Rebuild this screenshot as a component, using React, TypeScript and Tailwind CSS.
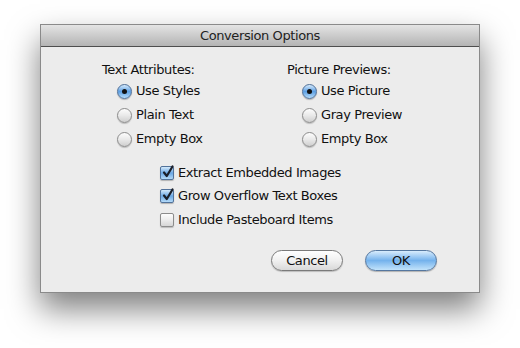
const font = { fontFamily: '"DejaVu Sans", "Lucida Grande", Verdana, sans-serif' };

type Opt = { label: string; on?: boolean };

const Radio = ({ on }: { on?: boolean }) => (
    <span
        className={
            on
                ? "relative flex h-[15px] w-[15px] shrink-0 items-center justify-center rounded-full border border-[#4f6f98] bg-linear-to-b from-[#d6ebfc] via-[#5d9fe2] to-[#b5dcfa] shadow-[0_1px_1px_rgba(0,0,0,0.25)]"
                : "relative flex h-[15px] w-[15px] shrink-0 items-center justify-center rounded-full border border-[#8c8c8c] bg-linear-to-b from-[#fdfdfd] via-[#e9e9e9] to-[#cfcfcf] shadow-[0_1px_1px_rgba(0,0,0,0.2)]"
        }
    >
        {on && <span className="h-[5px] w-[5px] rounded-full bg-[#111]" />}
    </span>
);

const Check = ({ on }: { on?: boolean }) => (
    <span
        className={
            on
                ? "relative h-[14px] w-[14px] shrink-0 rounded-[2px] border border-[#52729a] bg-linear-to-b from-[#d4eafb] via-[#6aa7e4] to-[#b4daf8] shadow-[0_1px_1px_rgba(0,0,0,0.25)]"
                : "relative h-[14px] w-[14px] shrink-0 rounded-[2px] border border-[#8c8c8c] bg-linear-to-b from-[#fdfdfd] via-[#ececec] to-[#d6d6d6] shadow-[0_1px_1px_rgba(0,0,0,0.2)]"
        }
    >
        {on && (
            <svg className="absolute -top-[2px] left-[1px]" width="13" height="14" viewBox="0 0 13 14">
                <path d="M2 7.5 L4.8 11 L10.5 1.5" fill="none" stroke="#1a1f2a" strokeWidth="2.2" strokeLinecap="round" strokeLinejoin="round" />
            </svg>
        )}
    </span>
);

const RadioGroup = ({ title, items }: { title: string; items: Opt[] }) => (
    <div className="flex flex-col">
        <div className="h-[16px] leading-[16px]">{title}</div>
        <div className="mt-[1px] flex flex-col pl-[15px]">
            {items.map((it) => (
                <div key={it.label} className="flex h-[24px] items-center gap-[4px]">
                    <Radio on={it.on} />
                    <span className="leading-[16px]">{it.label}</span>
                </div>
            ))}
        </div>
    </div>
);

const App = () => {
    return (
        <div className="h-[348px] w-[520px] bg-white pl-[40px] pt-[24px] text-[13px] tracking-[-0.4px] text-[#111]" style={font}>
            <div className="flex h-[269px] w-[440px] flex-col border border-[#8a8a8a] bg-[#ececec] shadow-[0_16px_30px_rgba(0,0,0,0.5)]">
                <div className="flex h-[22px] items-center justify-center border-b border-[#4e4e4e] bg-linear-to-b from-[#e4e4e4] to-[#b4b4b4] text-[#222]">
                    Conversion Options
                </div>
                <div className="flex flex-1 flex-col pt-[15px]">
                    <div className="flex pl-[61px]">
                        <div className="w-[185px]">
                            <RadioGroup title="Text Attributes:" items={[{ label: "Use Styles", on: true }, { label: "Plain Text" }, { label: "Empty Box" }]} />
                        </div>
                        <RadioGroup title="Picture Previews:" items={[{ label: "Use Picture", on: true }, { label: "Gray Preview" }, { label: "Empty Box" }]} />
                    </div>
                    <div className="mt-[10px] flex flex-col pl-[119px]">
                        {[
                            { label: "Extract Embedded Images", on: true },
                            { label: "Grow Overflow Text Boxes", on: true },
                            { label: "Include Pasteboard Items" },
                        ].map((it) => (
                            <div key={it.label} className="flex h-[23.5px] items-center gap-[4px]">
                                <Check on={it.on} />
                                <span className="leading-[16px]">{it.label}</span>
                            </div>
                        ))}
                    </div>
                    <div className="mt-auto flex justify-end gap-[22px] pb-[21px] pr-[42px]">
                        <button className="h-[21px] w-[72px] rounded-full border border-[#7a7a7a] bg-linear-to-b from-white via-[#f0f0f0] to-[#d9d9d9] leading-[19px] shadow-[0_1px_1px_rgba(0,0,0,0.2)]">
                            Cancel
                        </button>
                        <button className="h-[21px] w-[72px] rounded-full border border-[#55779f] bg-linear-to-b from-[#d8ecfc] via-[#74b2ec] to-[#c2e3fb] leading-[19px] shadow-[0_1px_1px_rgba(0,0,0,0.25)]">
                            OK
                        </button>
                    </div>
                </div>
            </div>
        </div>
    );
};

export default App;
